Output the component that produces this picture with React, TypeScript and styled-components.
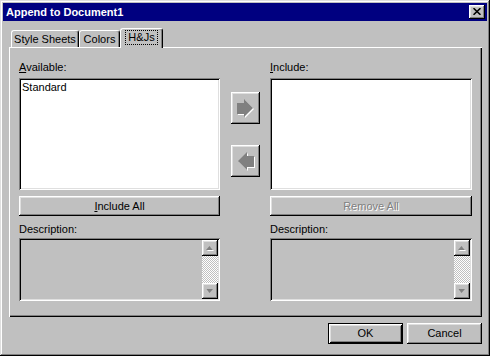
import React from 'react';
import styled, { createGlobalStyle } from 'styled-components';

const Global = createGlobalStyle`
  html, body { margin: 0; padding: 0; background: #c0c0c0; }
  body {
    font-family: "Liberation Sans", Arial, sans-serif;
    font-size: 11px;
    color: #000;
  }
  * { box-sizing: border-box; }
`;

const raised = `inset -1px -1px #000, inset 1px 1px #fff, inset -2px -2px #808080, inset 2px 2px #dfdfdf`;
const sunken = `inset 1px 1px #808080, inset -1px -1px #fff, inset 2px 2px #000, inset -2px -2px #dfdfdf`;

const Window = styled.div`
  width: 490px;
  height: 356px;
  padding: 3px;
  background: #c0c0c0;
  box-shadow: inset -1px -1px #000, inset 1px 1px #dfdfdf, inset -2px -2px #808080, inset 2px 2px #fff;
  display: flex;
  flex-direction: column;
`;

const TitleBar = styled.div`
  height: 18px;
  background: #000080;
  display: flex;
  align-items: center;
  justify-content: space-between;
  padding: 0 2px 0 3px;
`;

const Title = styled.span`
  color: #fff;
  font-weight: bold;
  font-size: 11px;
  line-height: 13px;
`;

const CloseButton = styled.div`
  width: 16px;
  height: 14px;
  background: #c0c0c0;
  box-shadow: ${raised};
  display: flex;
  align-items: center;
  justify-content: center;
  padding-bottom: 1px;
`;

const TabRow = styled.div`
  margin-top: 7px;
  margin-left: 8px;
  height: 19px;
  display: flex;
  align-items: flex-end;
`;

const Tab = styled.div<{ $active?: boolean; $w: number }>`
  position: relative;
  z-index: ${p => (p.$active ? 1 : 0)};
  width: ${p => p.$w}px;
  height: ${p => (p.$active ? 20 : 17)}px;
  margin-bottom: ${p => (p.$active ? -1 : 0)}px;
  background: #c0c0c0;
  border-top: 1px solid #fff;
  border-left: 1px solid #fff;
  border-right: 1px solid #000;
  border-radius: 3px 3px 0 0;
  box-shadow: inset -1px 0 #808080;
  display: flex;
  align-items: center;
  justify-content: center;
  line-height: 13px;
  padding-bottom: ${p => (p.$active ? 2 : 0)}px;
`;

const Focus = styled.span`
  outline: 1px dotted #000;
  padding: 0 2px;
`;

const Panel = styled.div`
  margin: 0 5px 0 6px;
  height: 270px;
  padding: 14px 10px 0 10px;
  display: flex;
  box-shadow: inset 1px 1px #fff, inset -1px -1px #000, inset -2px -2px #808080;
`;

const Column = styled.div<{ $w: number }>`
  width: ${p => p.$w}px;
  display: flex;
  flex-direction: column;
`;

const ArrowColumn = styled.div`
  width: 50px;
  display: flex;
  flex-direction: column;
  align-items: center;
  padding-top: 31px;
  gap: 21px;
`;

const Label = styled.div<{ $gap?: number }>`
  height: 13px;
  line-height: 13px;
  margin-top: ${p => p.$gap ?? 0}px;
`;

const ListBox = styled.div`
  margin-top: 4px;
  height: 112px;
  background: #fff;
  box-shadow: ${sunken};
  padding: 3px 3px;
  line-height: 13px;
`;

const Button = styled.div<{ $disabled?: boolean; $default?: boolean; $w?: number }>`
  height: ${p => (p.$w ? 21 : 20)}px;
  width: ${p => (p.$w ? `${p.$w}px` : 'auto')};
  margin-top: ${p => (p.$w ? 0 : 6)}px;
  background: #c0c0c0;
  box-shadow: ${p =>
    p.$default
      ? 'inset 0 0 0 1px #000, inset 2px 2px #fff, inset -2px -2px #000, inset 3px 3px #dfdfdf, inset -3px -3px #808080'
      : raised};
  display: flex;
  align-items: center;
  justify-content: center;
  line-height: 13px;
  color: ${p => (p.$disabled ? '#808080' : '#000')};
  text-shadow: ${p => (p.$disabled ? '1px 1px 0 #fff' : 'none')};
`;

const ArrowButton = styled.div`
  width: 29px;
  height: 32px;
  background: #c0c0c0;
  box-shadow: ${raised};
  display: flex;
`;

const DescBox = styled.div`
  margin-top: 2px;
  height: 63px;
  background: #c0c0c0;
  box-shadow: ${sunken};
  padding: 2px;
  display: flex;
  justify-content: flex-end;
`;

const ScrollBar = styled.div`
  width: 16px;
  display: flex;
  flex-direction: column;
`;

const ScrollButton = styled.div`
  width: 16px;
  height: 16px;
  background: #c0c0c0;
  box-shadow: ${raised};
  display: flex;
  align-items: center;
  justify-content: center;
`;

const Track = styled.div`
  flex: 1;
  background-image: conic-gradient(#fff 0 25%, #c0c0c0 0 50%, #fff 0 75%, #c0c0c0 0 100%);
  background-size: 2px 2px;
`;

const Footer = styled.div`
  display: flex;
  justify-content: flex-end;
  gap: 4px;
  margin: 6px 5px 0 0;
`;

const CloseIcon = () => (
  <svg width="8" height="7" viewBox="0 0 8 7">
    <path d="M0.5 0.2 L7.5 6.8 M7.5 0.2 L0.5 6.8" stroke="#000" strokeWidth="1.6" fill="none" />
  </svg>
);

const RIGHT = '6,11 13,11 13,7 22,16 13,25 13,22 6,22';
const LEFT = '23,11 16,11 16,7 7,16 16,25 16,22 23,22';

const ArrowIcon = ({ dir }: { dir: 'left' | 'right' }) => {
  const pts = dir === 'right' ? RIGHT : LEFT;
  return (
    <svg width="29" height="32" viewBox="0 0 29 32">
      <polygon points={pts} fill="#fff" transform="translate(1,1)" />
      <polygon points={pts} fill="#808080" />
    </svg>
  );
};

const ScrollArrow = ({ up }: { up?: boolean }) => (
  <svg width="8" height="5" viewBox="0 0 8 5">
    <g transform={up ? '' : 'rotate(180 3.5 2)'}>
      <polygon points="3.5,0 7,4 0,4" fill="#fff" transform="translate(1,1)" />
      <polygon points="3.5,0 7,4 0,4" fill="#808080" />
    </g>
  </svg>
);

const Description = () => (
  <DescBox>
    <ScrollBar>
      <ScrollButton>
        <ScrollArrow up />
      </ScrollButton>
      <Track />
      <ScrollButton>
        <ScrollArrow />
      </ScrollButton>
    </ScrollBar>
  </DescBox>
);

export default function App() {
  return (
    <>
      <Global />
      <Window>
        <TitleBar>
          <Title>Append to Document1</Title>
          <CloseButton>
            <CloseIcon />
          </CloseButton>
        </TitleBar>
        <TabRow>
          <Tab $w={68}>Style Sheets</Tab>
          <Tab $w={41}>Colors</Tab>
          <Tab $w={43} $active>
            <Focus>H&amp;Js</Focus>
          </Tab>
        </TabRow>
        <Panel>
          <Column $w={201}>
            <Label>
              <u>A</u>vailable:
            </Label>
            <ListBox>Standard</ListBox>
            <Button>
              <u>I</u>nclude All
            </Button>
            <Label $gap={7}>Description:</Label>
            <Description />
          </Column>
          <ArrowColumn>
            <ArrowButton>
              <ArrowIcon dir="right" />
            </ArrowButton>
            <ArrowButton>
              <ArrowIcon dir="left" />
            </ArrowButton>
          </ArrowColumn>
          <Column $w={202}>
            <Label>
              <u>I</u>nclude:
            </Label>
            <ListBox />
            <Button $disabled>Remove All</Button>
            <Label $gap={7}>Description:</Label>
            <Description />
          </Column>
        </Panel>
        <Footer>
          <Button $w={75} $default>
            OK
          </Button>
          <Button $w={75}>Cancel</Button>
        </Footer>
      </Window>
    </>
  );
}
